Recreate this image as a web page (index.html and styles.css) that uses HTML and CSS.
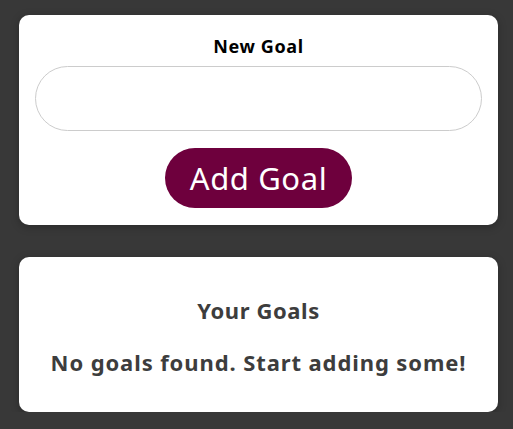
FILE: index.html
```html
<!DOCTYPE html>
<html>
<head>
<meta charset="utf-8">
<link rel="stylesheet" href="styles.css">
</head>
<body>
<main class="page">
  <section class="card form-card">
    <label class="label" for="goal">New Goal</label>
    <input class="input" id="goal" type="text">
    <button class="btn" type="button">Add Goal</button>
  </section>
  <section class="card list-card">
    <h2 class="title">Your Goals</h2>
    <p class="empty">No goals found. Start adding some!</p>
  </section>
</main>
</body>
</html>
```
FILE: styles.css
```css
html, body {
  margin: 0;
  padding: 0;
  background: #383838;
  font-family: "Noto Sans", "Open Sans", sans-serif;
}
.page {
  display: flex;
  flex-direction: column;
  gap: 32px;
  padding: 15px 15px 0 19px;
}
.card {
  background: #fff;
  border-radius: 10px;
  box-shadow: 0 2px 8px rgba(0,0,0,0.26);
  display: flex;
  flex-direction: column;
  align-items: center;
}
.form-card {
  padding: 20px 16px 17px;
  height: 210px;
  box-sizing: border-box;
}
.label {
  font-weight: bold;
  font-size: 18px;
  letter-spacing: 0.6px;
  line-height: 22px;
  color: #000;
  margin-bottom: 9px;
}
.input {
  width: 100%;
  box-sizing: border-box;
  height: 65px;
  border: 1px solid #ccc;
  border-radius: 33px;
  font: inherit;
  outline: none;
}
.btn {
  margin-top: 17px;
  width: 187px;
  height: 60px;
  border: none;
  border-radius: 30px;
  background: #6e003d;
  color: #fff;
  font-family: inherit;
  font-size: 31px;
  letter-spacing: 0.6px;
  padding: 0;
}
.list-card {
  height: 155px;
  box-sizing: border-box;
  padding-top: 38px;
}
.title {
  margin: 0;
  font-size: 22px;
  letter-spacing: 0.6px;
  line-height: 30px;
  color: #3d3d3d;
  font-weight: bold;
}
.empty {
  margin: 22px 0 0;
  font-size: 22px;
  letter-spacing: 0.9px;
  line-height: 30px;
  color: #3d3d3d;
  font-weight: bold;
}
```
